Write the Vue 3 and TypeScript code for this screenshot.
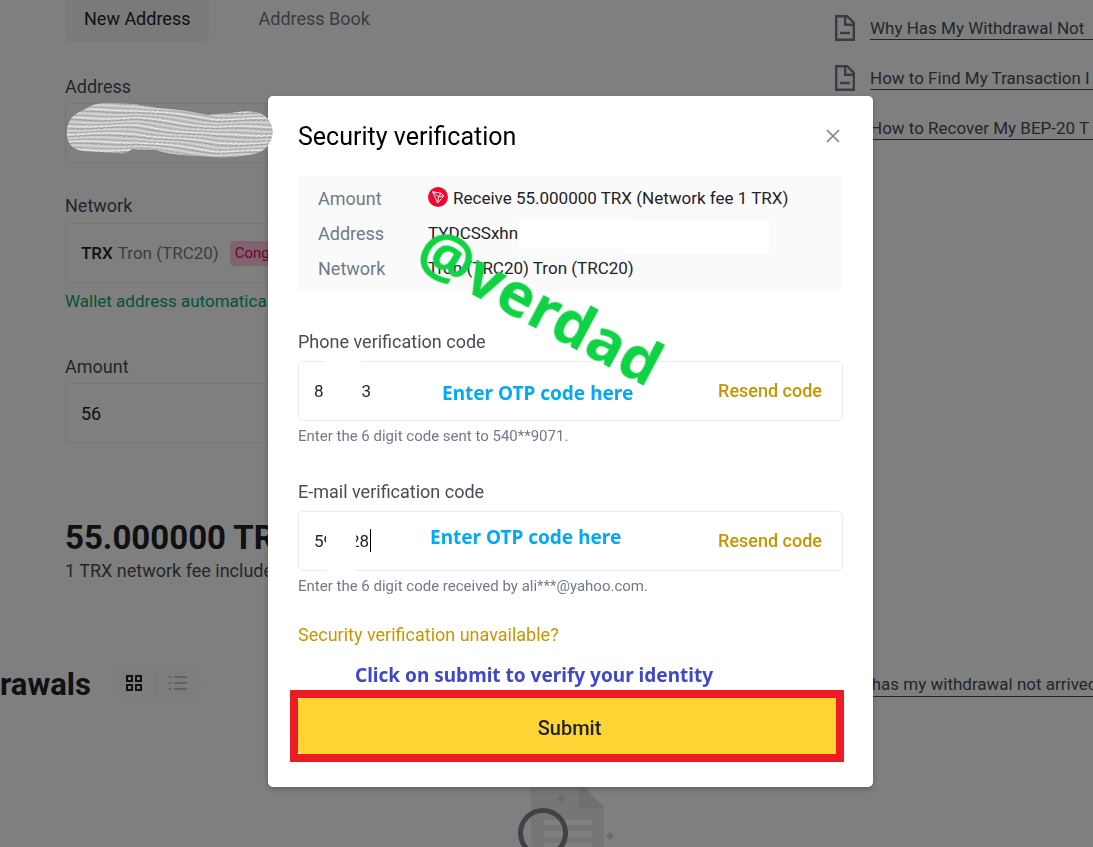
<script setup lang="ts">
import { ref } from 'vue'

const nb = '\u00a0'
const address = ref('')
const amount = ref('56')
const phoneCode = ref('8' + nb.repeat(9) + '3')
const emailCode = ref('59' + nb.repeat(4) + '28')

const articles: string[] = [
  'Why Has My Withdrawal Not',
  'How to Find My Transaction I',
  'How to Recover My BEP-20 T',
]

interface Stroke { d: string; color: string }
const strokes: Stroke[] = []
const shades = ['#f4f4f4', '#9c9c9c', '#dedede', '#adadad']
for (let i = 0; i < 34; i++) {
  let d = ''
  for (let x = 0; x <= 208; x += 2) {
    const drift = x < 70 ? 0 : Math.min(9, (x - 70) / 9)
    const y = i * 2 - 8 + drift + Math.sin(x / 14 + i * 0.4) * 0.9 + Math.sin(x * 1.9 + i * 2.3) * 0.8
    d += `${x ? 'L' : 'M'}${x} ${y.toFixed(1)}`
  }
  strokes.push({ d, color: shades[i % 4] })
}
</script>

<template>
  <div class="page">
    <div class="upper">
      <main class="form">
        <nav class="tabs">
          <button class="tab active">New Address</button>
          <button class="tab">Address Book</button>
        </nav>
        <label class="label" for="address">Address</label>
        <input id="address" v-model="address" class="box" type="text" />
        <span id="network-label" class="label second">Network</span>
        <button class="box network" aria-labelledby="network-label">
          <b>TRX</b><span class="muted">Tron (TRC20)</span><span class="tag">Congested</span>
        </button>
        <p class="match">Wallet address automatically matched</p>
        <label class="label third" for="amount">Amount</label>
        <input id="amount" v-model="amount" class="box" type="text" />
        <p class="total">55.000000 TRX</p>
        <p class="fee">1 TRX network fee included</p>
      </main>
      <aside class="articles">
        <a v-for="article in articles" :key="article" href="#" class="article">
          <svg width="20" height="26" viewBox="0 0 20 26" fill="none" stroke="#707a8a" stroke-width="2.4">
            <path d="M1.2 1.2h11l6.6 6.6v17H1.2z" />
            <path d="M10.2 1.5v8.3h8.3M5 18h10" />
          </svg>
          <span>{{ article }}</span>
        </a>
      </aside>
    </div>
    <div class="history">
      <h2>rawals</h2>
      <div class="views">
        <button aria-label="Grid view">
          <svg width="16" height="16" viewBox="0 0 16 16" fill="none" stroke="#1e2329" stroke-width="2">
            <path d="M1 1h5v5H1zM10 1h5v5h-5zM1 10h5v5H1zM10 10h5v5h-5z" />
          </svg>
        </button>
        <i></i>
        <button aria-label="List view">
          <svg width="18" height="16" viewBox="0 0 18 16" stroke="#aeb4bc" stroke-width="1.6">
            <path d="M0 2h2M5 2h13M0 8h2M5 8h13M0 14h2M5 14h13" />
          </svg>
        </button>
      </div>
      <a href="#" class="why">Why has my withdrawal not arrived</a>
    </div>
    <div class="empty">
      <svg width="100" height="110" viewBox="0 0 100 110">
        <path d="M15 0h45l28 27v83H15z" fill="#ededee" />
        <path d="M63 0v27h25z" fill="#dfe0e2" />
        <path d="M28 39h48v5H28zM28 50h48v6H28zM28 62h48v6H28z" fill="#fff" />
        <path d="M45 14l4 4-4 4-4-4zM94 51l4 4-4 4-4-4z" fill="#d4d6d9" />
        <circle cx="27" cy="52" r="22.5" fill="none" stroke="#7c8592" stroke-width="5" />
      </svg>
    </div>
  </div>

  <div class="overlay">
    <section class="modal" role="dialog" aria-labelledby="modal-title">
      <header>
        <h1 id="modal-title">Security verification</h1>
        <button class="close" aria-label="Close">
          <svg width="14" height="14" viewBox="0 0 14 14" stroke="#7b8594" stroke-width="1.7">
            <path d="M1 1l12 12M13 1L1 13" />
          </svg>
        </button>
      </header>

      <dl class="summary">
        <div>
          <dt>Amount</dt>
          <dd>
            <svg class="coin" width="20" height="20" viewBox="0 0 20 20">
              <circle cx="10" cy="10" r="10" fill="#f0062f" />
              <path d="M4.6 4.8l8.4 1.4 2.7 2.5-6 7.4zM4.6 4.8l5.9 5L9.7 16M10.5 9.8L13 6.2M10.5 9.8l5.2-1.1" fill="none" stroke="#fff" stroke-width=".9" stroke-linejoin="round" />
            </svg>
            Receive 55.000000 TRX (Network fee 1 TRX)
          </dd>
        </div>
        <div>
          <dt>Address</dt>
          <dd>TYDCSSxhn</dd>
        </div>
        <div>
          <dt>Network</dt>
          <dd>Tron (TRC20) Tron (TRC20)</dd>
        </div>
        <i class="blank first"></i>
        <i class="blank last"></i>
      </dl>

      <div class="group">
        <label for="phone">Phone verification code</label>
        <div class="code">
          <input id="phone" v-model="phoneCode" type="text" />
          <button>Resend code</button>
          <i class="erase top"></i>
          <span class="note phone-note">Enter OTP code here</span>
        </div>
        <p>Enter the 6 digit code sent to 540**9071.</p>
      </div>

      <div class="group">
        <label for="email">E-mail verification code</label>
        <div class="code">
          <input id="email" v-model="emailCode" type="text" />
          <button>Resend code</button>
          <i class="erase bottom"></i>
          <i class="caret"></i>
          <span class="note email-note">Enter OTP code here</span>
        </div>
        <p>Enter the 6 digit code received by ali***@yahoo.com.</p>
      </div>

      <a href="#" class="help">Security verification unavailable?</a>
      <p class="instruction">Click on submit to verify your identity</p>
      <div class="frame"><button class="submit">Submit</button></div>

      <span class="watermark">@verdad</span>
      <svg class="scribble" width="208" height="56" viewBox="0 0 208 56">
        <defs>
          <clipPath id="brush">
            <path d="M1 34Q-1 14 20 7Q27 1 40 1L68 2Q80 4 92 6Q120 8 142 13L165 11Q190 7 199 14Q209 23 206 35Q203 48 188 52Q165 57 135 54Q105 53 90 48L66 47Q61 52 52 51L17 49Q3 47 1 34Z" />
          </clipPath>
        </defs>
        <g clip-path="url(#brush)">
          <rect width="208" height="56" fill="#c2c2c2" />
          <path v-for="(s, i) in strokes" :key="i" :d="s.d" :stroke="s.color" fill="none" stroke-width="1" />
        </g>
      </svg>
    </section>
  </div>
</template>

<style>
body { margin: 0; overflow: hidden; background: #fff; }
</style>

<style scoped>
.page, .overlay { font-family: Roboto, "Liberation Sans", sans-serif; font-size: 18px; line-height: 24px; color: #1e2329; }
.page *, .overlay * { box-sizing: border-box; }
button, input { font: inherit; color: inherit; border: 0; background: none; padding: 0; margin: 0; outline: 0; }
button { cursor: pointer; }
p, h1, h2, dl, dd { margin: 0; }
svg { display: block; flex: none; }
a { color: inherit; text-decoration: none; }

.page { height: 100vh; overflow: hidden; white-space: nowrap; }
.upper { display: grid; grid-template-columns: minmax(0, 1fr) 258px; padding-left: 65px; }
.form { display: flex; flex-direction: column; padding-right: 120px; }
.tabs { display: flex; gap: 30px; margin-bottom: 33px; }
.tab { height: 42px; padding: 0 19px 4px; color: #707a8a; }
.tab.active { background: #f4f4f5; color: #1e2329; border-radius: 0 0 5px 5px; }
.label { color: #474d57; margin-bottom: 4px; }
.second { margin-top: 31px; margin-bottom: 5px; }
.third { margin-top: 42px; }
.box { height: 60px; border: 1px solid #eaecef; border-radius: 5px; padding: 0 15px; }
.network { display: flex; align-items: center; gap: 5px; text-align: left; font-size: 17px; }
.network b { font-weight: 500; }
.muted { color: #707a8a; }
.tag { margin-left: 6px; padding: 0 5px; border-radius: 4px; background: #ffc9dc; color: #d9007a; font-size: 15px; line-height: 25px; }
.match { margin-top: 6px; color: #03a66d; font-size: 17px; }
.total { margin-top: 75px; font-size: 33px; line-height: 40px; font-weight: 700; }
.fee { margin-top: 1px; color: #474d57; }
.articles { display: flex; flex-direction: column; gap: 24px; padding-top: 15px; overflow: hidden; }
.article { display: flex; gap: 15px; height: 26px; color: #474d57; font-size: 17px; }
.article span { flex: 1; height: 25px; line-height: 27px; border-bottom: 1px solid #474d57; }

.history { display: flex; align-items: center; height: 40px; margin-top: 80px; }
.history h2 { width: 90px; padding-top: 4px; text-align: right; font-size: 31px; font-weight: 700; }
.views { display: flex; align-items: center; justify-content: center; gap: 13px; width: 91px; height: 40px; margin-left: 21px; border-radius: 20px; background: #fafafa; }
.views i { width: 1px; height: 20px; background: #e6e8ea; }
.why { width: 258px; margin-left: auto; padding-top: 4px; overflow: hidden; color: #474d57; border-bottom: 1px solid #474d57; font-size: 17px; line-height: 23px; }
.empty { display: flex; justify-content: center; margin-top: 78px; padding-left: 38px; }

.overlay { position: fixed; inset: 0; display: flex; justify-content: center; align-items: flex-start; padding: 96px 0 0 48px; background: rgba(0, 0, 0, .5); }
.modal { position: relative; flex: 0 1 605px; padding: 24px 30px 25px; background: #fff; border-radius: 5px; box-shadow: 0 2px 6px rgba(0, 0, 0, .25); white-space: nowrap; }
header { display: flex; justify-content: space-between; align-items: center; height: 32px; margin-bottom: 24px; }
h1 { padding-top: 2px; font-size: 25px; line-height: 32px; font-weight: 400; color: #000; }
.close { padding: 3px; }
.summary { position: relative; padding: 5px 20px; background: #fafafa; border-radius: 5px; }
.summary div { display: flex; height: 35px; line-height: 35px; }
.summary dt { width: 110px; color: #707a8a; }
.summary dd { display: flex; gap: 5px; font-size: 17px; }
.coin { margin-top: 6px; }
.blank { position: absolute; background: #fff; }
.blank.first { left: 221px; top: 41px; width: 110px; height: 32px; }
.blank.last { left: 326px; top: 44px; width: 145px; height: 34px; }
.group { margin-top: 34px; }
.summary + .group { margin-top: 39px; }
.group label { display: block; margin-bottom: 7px; color: #474d57; }
.group p { margin-top: 5px; font-size: 15px; line-height: 20px; color: #707a8a; }
.code { position: relative; display: flex; align-items: center; height: 60px; padding: 0 20px 0 15px; border: 1px solid #eaecef; border-radius: 5px; }
.code input { flex: 1; min-width: 0; font-size: 17px; }
.code button { color: #c99400; font-weight: 500; }
.erase { position: absolute; width: 36px; left: 26px; height: 50px; background: #fff; }
.erase.top { top: -1px; }
.erase.bottom { top: 10px; left: 27px; width: 30px; }
.caret { position: absolute; left: 71px; top: 17px; width: 1px; height: 23px; background: #000; }
.note, .instruction { font-family: "Noto Sans", "Open Sans", sans-serif; font-weight: 700; font-size: 19px; line-height: 24px; }
.note { position: absolute; color: #03a9f4; }
.phone-note { left: 143px; top: 19px; }
.email-note { left: 131px; top: 13px; }
.help { display: block; margin-top: 27px; color: #c99400; }
.instruction { margin-top: 16px; padding-left: 57px; color: #3f48cc; }
.frame { margin: 3px -1px 0 -8px; border: 8px solid #ed1c24; background: #fff; }
.submit { display: block; width: 100%; height: 56px; padding: 4px 0 0 5px; background: #fcd535; font-size: 20px; font-weight: 500; border-radius: 4px 0 0 4px; }
.watermark { position: absolute; left: 140px; top: 173px; font-family: "Noto Sans", "Open Sans", sans-serif; font-weight: 700; font-size: 61px; line-height: 72px; color: #10d245; transform: rotate(28deg); }
.scribble { position: absolute; left: -202px; top: 6px; }
</style>
